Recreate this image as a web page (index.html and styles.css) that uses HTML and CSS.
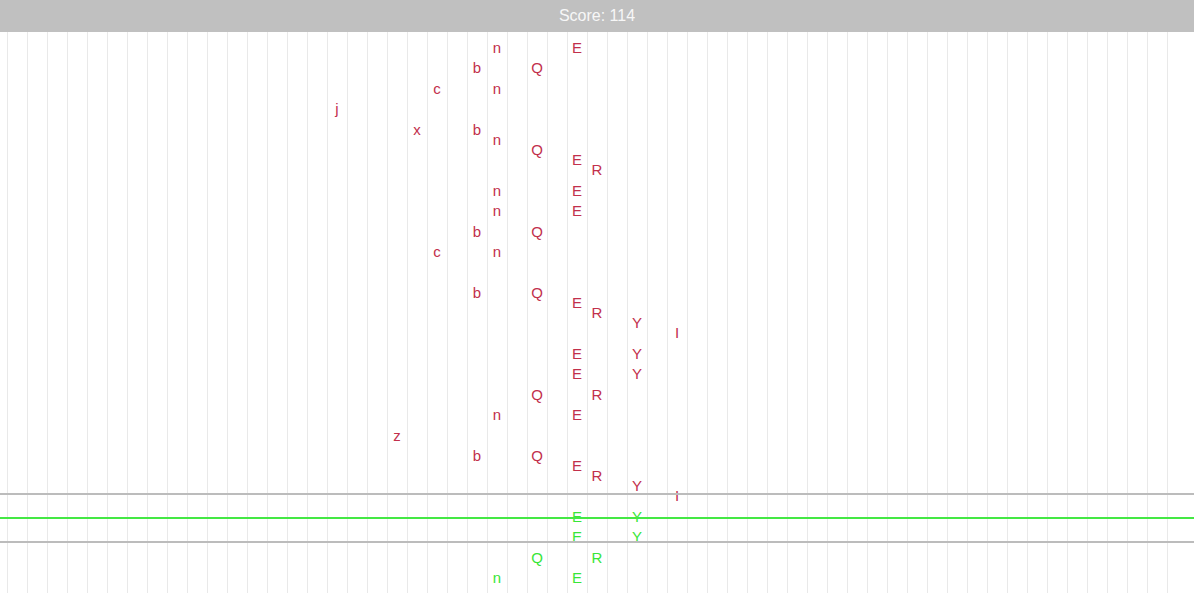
FILE: index.html
```html
<!DOCTYPE html>
<html>
<head>
  <meta charset="utf-8">
  <title>Score</title>
  <link rel="stylesheet" href="styles.css">
</head>
<body>
  <div class="score">Score: <span id="score">114</span></div>
  <div class="field">
    <div class="lanes" id="lanes"></div>
    <div class="line line-top"></div>
    <div class="line line-hit"></div>
    <div class="line line-bottom"></div>
  </div>

<script>
  var $ = function(id) {
    return document.getElementById(id);
  }

  // 音符：[行的y, 字母, 轨道, 是否命中]
  var notes = [
    [47,'n',24],[47,'E',28],
    [67,'b',23],[67,'Q',26],
    [88,'c',21],[88,'n',24],
    [108,'j',16],
    [129,'x',20],[129,'b',23],
    [139,'n',24],
    [149,'Q',26],
    [159,'E',28],
    [169,'R',29],
    [190,'n',24],[190,'E',28],
    [210,'n',24],[210,'E',28],
    [231,'b',23],[231,'Q',26],
    [251,'c',21],[251,'n',24],
    [292,'b',23],[292,'Q',26],
    [302,'E',28],
    [312,'R',29],
    [322,'Y',31],
    [332,'I',33],
    [353,'E',28],[353,'Y',31],
    [373,'E',28],[373,'Y',31],
    [394,'Q',26],[394,'R',29],
    [414,'n',24],[414,'E',28],
    [435,'z',19],
    [455,'b',23],[455,'Q',26],
    [465,'E',28],
    [475,'R',29],
    [485,'Y',31],
    [495,'I',33],
    [516,'E',28,1],[516,'Y',31,1],
    [536,'E',28,1],[536,'Y',31,1],
    [557,'Q',26,1],[557,'R',29,1],
    [577,'n',24,1],[577,'E',28,1]
  ];

  var buildLanes = (function () {
    var lanes = $('lanes');
    var list = [];
    for (var i = 0; i < 59; i++) {
      var lane = document.createElement('div');
      lane.className = 'lane';
      lanes.appendChild(lane);
      list.push(lane);
    }

    for (var j = 0; j < notes.length; j++) {
      var n = notes[j];
      var span = document.createElement('span');
      span.className = n[3] ? 'note hit' : 'note';
      span.appendChild(document.createTextNode(n[1]));
      // 页面的y减去顶部栏高度
      span.style.top = (n[0] - 9 - 32) + 'px';
      list[n[2]].appendChild(span);
    }
  })();
</script>
</body>
</html>
```

FILE: styles.css
```css
html, body{
  margin: 0;
  padding: 0;
  height: 100%;
  overflow: hidden;
  background-color: #fff;
  font-family: "Liberation Sans", Arial, sans-serif;
}
.score{
  position: relative;
  z-index: 2;
  height: 32px;
  line-height: 31px;
  background-color: #c0c0c0;
  color: #f7f7f7;
  font-size: 16px;
  text-align: center;
}
.field{
  position: relative;
  height: 561px;
  overflow: hidden;
}
.lanes{
  display: flex;
  height: 100%;
  padding-left: 7px;
}
.lane{
  position: relative;
  flex: 0 0 20px;
  box-sizing: border-box;
  border-left: 1px solid #e9e9e9;
}
.note{
  position: absolute;
  left: -1px;
  width: 20px;
  height: 20px;
  line-height: 20px;
  text-align: center;
  font-size: 15px;
  color: #c2304c;
}
.note.hit{
  color: #38e638;
}
.line{
  position: absolute;
  left: 0;
  right: 0;
  height: 2px;
  background-color: #bcbcbc;
}
.line-top{
  top: 461px;
}
.line-hit{
  top: 485px;
  height: 2px;
  background-color: #44e844;
}
.line-bottom{
  top: 509px;
}
```
